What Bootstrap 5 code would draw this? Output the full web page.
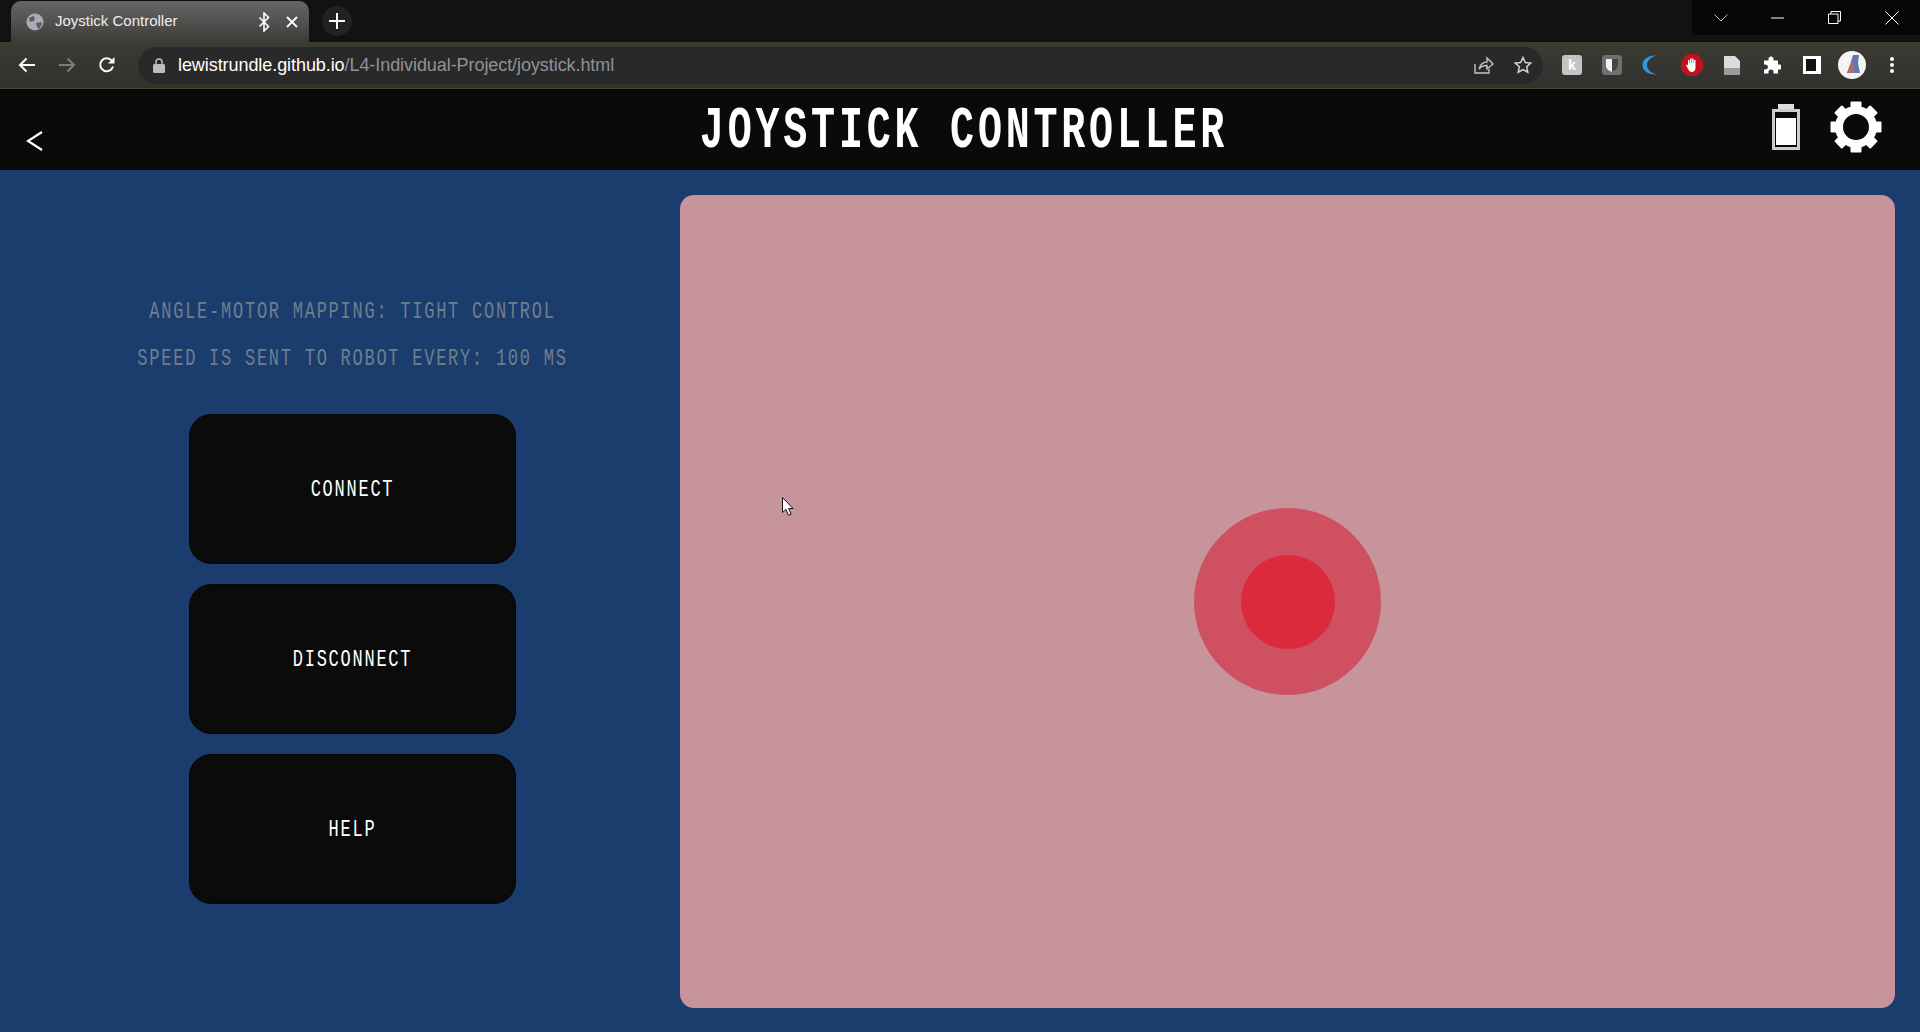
<!DOCTYPE html>
<html lang="en">
<head>
    <meta charset="UTF-8">
    <meta name="viewport" content="width=device-width, initial-scale=1.0">
    <title>Joystick Controller</title>
    <link rel="stylesheet" href="https://cdn.jsdelivr.net/npm/bootstrap@5.3.0/dist/css/bootstrap.min.css">
    <style>
        html, body { height: 100%; overflow: hidden; }
        body { background: #1b3d6e; font-family: "Liberation Sans", Arial, sans-serif; }

        /* browser frame */
        .tab-strip { height: 42px; background: #121212; }
        .browser-tab { width: 298px; height: 41px; margin: 1px 0 0 11px; padding: 0 11px 0 15px; border-radius: 10px 10px 0 0;
            background: linear-gradient(#666, #3c3c38); color: #eee; font-size: 15px; }
        .tab-title { margin-left: 3px; }
        .new-tab { width: 30px; height: 30px; margin: 6px 0 0 13px; background: #222; }
        .win-controls { height: 35px; background: #060606; }
        .win-btn { width: 57px; height: 35px; }
        .tool-bar { height: 47px; padding-left: 7px; background: linear-gradient(#3c3c33, #303030); border-bottom: 1px solid #4a4630; }
        .tool-btn { width: 40px; height: 40px; }
        .omni-box { height: 37px; margin-left: 11px; padding: 0 7px 0 11px; background: #292929; color: #8f9398; font-size: 18px; letter-spacing: -.07px; }
        .omni-url { margin-left: 5px; }
        .omni-host { color: #fff; }
        .share-icon { margin-right: 20px; }
        .ext-area { width: 377px; padding-left: 9px; }
        .ext-k { width: 20px; height: 20px; background: #c4c4c4; color: #fff; font-size: 14px; font-weight: 700; line-height: 20px; text-align: center; border-radius: 3px; }
        .ext-moon { margin-right: 4px; }

        /* page */
        .page-head { height: 81px; background: #0a0a0a; }
        .head-side { flex: 1 1 0; }
        .head-icons { padding-bottom: 6px; gap: 30px; }
        .gear-icon { margin-right: 38px; }
        .back-link { margin: 21px 0 0 26px; }
        .digi { display: inline-block; font-family: "Liberation Mono", "Courier New", monospace; transform: scaleY(1.4); }
        .digi-title { font-size: 40px; font-weight: 700; letter-spacing: 3.8px; line-height: 1; color: #fff; transform: scaleY(1.48); margin: 4px 0 0 8px; }
        .side-col { width: 680px; padding: 129px 0 0 25px; }
        .info-line { height: 47px; margin: 0; line-height: 23px; text-align: center; color: #6e7f8d; }
        .digi-sm { font-size: 17px; letter-spacing: 1.75px; }
        .pad-stack { margin-top: 21px; gap: 20px; }
        .pad-btn { width: 327px; height: 150px; padding-top: 8px; border: 1px solid #050505; border-radius: 22px; background: #0b0b0b; color: #fff; }
        .pad-btn:hover { background: #0b0b0b; color: #fff; }
        .stick-area { margin: 25px 25px 24px 0; border-radius: 14px; background: #c6949a; }
        .stick-base { width: 187px; height: 187px; background: #cf5060; }
        .stick-knob { width: 94px; height: 94px; background: #db2a3b; }
        .mouse-cursor { position: absolute; left: 782px; top: 497px; }
    </style>
</head>
<body class="d-flex flex-column">
    <div class="tab-strip d-flex align-items-start flex-shrink-0">
        <div class="browser-tab d-flex align-items-center">
            <svg width="18" height="18" viewBox="0 0 18 18" class="me-2 flex-shrink-0"><circle cx="9" cy="9" r="8.5" fill="#a9adb3"/><path d="M3 5l4-2 2 2-1 3-4 1zM10 10l5-1 1 2-3 5-2-2z" fill="#5b5e63"/></svg>
            <span class="tab-title flex-grow-1">Joystick Controller</span>
            <svg width="12" height="20" viewBox="0 0 12 20" class="me-3"><path d="M1.5 5.500l9 9-4.500 4.500v-18l4.500 4.500-9 9" fill="none" stroke="#fff" stroke-width="1.600"/></svg>
            <svg width="12" height="12" viewBox="0 0 12 12"><path d="M1 1l10 10M11 1l-10 10" stroke="#fff" stroke-width="1.800"/></svg>
        </div>
        <div class="new-tab d-flex align-items-center justify-content-center rounded-circle">
            <svg width="16" height="16" viewBox="0 0 16 16"><path d="M8 0v16M0 8h16" stroke="#fff" stroke-width="2"/></svg>
        </div>
        <div class="win-controls d-flex ms-auto">
            <div class="win-btn d-flex align-items-center justify-content-center"><svg width="14" height="8" viewBox="0 0 14 8"><path d="M.5.500l6.500 6.500 6.500-6.500" fill="none" stroke="#bbb"/></svg></div>
            <div class="win-btn d-flex align-items-center justify-content-center"><svg width="13" height="2" viewBox="0 0 13 2"><path d="M0 1h13" stroke="#fff"/></svg></div>
            <div class="win-btn d-flex align-items-center justify-content-center"><svg width="13" height="13" viewBox="0 0 13 13"><path d="M3 3V.5h9.500V10H10M.5 3h9.500v9.500H.5z" fill="none" stroke="#fff"/></svg></div>
            <div class="win-btn d-flex align-items-center justify-content-center"><svg width="14" height="14" viewBox="0 0 14 14"><path d="M.5.500l13 13M13.500.500l-13 13" stroke="#fff"/></svg></div>
        </div>
    </div>

    <div class="tool-bar d-flex align-items-center flex-shrink-0">
        <div class="tool-btn d-flex align-items-center justify-content-center"><svg width="18" height="16" viewBox="0 0 18 16"><path d="M17 8H2M8.500 1.500L2 8l6.500 6.500" fill="none" stroke="#fff" stroke-width="2"/></svg></div>
        <div class="tool-btn d-flex align-items-center justify-content-center"><svg width="18" height="16" viewBox="0 0 18 16"><path d="M1 8h15M9.500 1.500L16 8l-6.500 6.500" fill="none" stroke="#7c7c7c" stroke-width="2"/></svg></div>
        <div class="tool-btn d-flex align-items-center justify-content-center"><svg width="18" height="18" viewBox="0 0 18 18"><path d="M15 10.500A6.500 6.500 0 1 1 13.600 4.400" fill="none" stroke="#fff" stroke-width="2"/><path d="M16.500 1v6.500H10z" fill="#fff"/></svg></div>
        <div class="omni-box d-flex align-items-center flex-grow-1 rounded-pill">
            <svg width="12" height="15" viewBox="0 0 12 15" class="ms-1 me-2 flex-shrink-0"><path d="M3 6V4a3 3 0 0 1 6 0v2" fill="none" stroke="#bdbdbd" stroke-width="1.500"/><rect y="6" width="12" height="9" rx="1.500" fill="#bdbdbd"/></svg>
            <span class="omni-url flex-grow-1"><span class="omni-host">lewistrundle.github.io</span>/L4-Individual-Project/joystick.html</span>
            <svg width="20" height="18" viewBox="0 0 20 18" class="share-icon"><path d="M1 8v9h14v-4M5 13c1-5 5-7 8-7V2l6 6-6 5V9.500c-3 0-6 1-8 3.500z" fill="none" stroke="#c4c4c4" stroke-width="1.400"/></svg>
            <svg width="18" height="18" viewBox="0 0 18 18" class="me-1"><path d="M9 1.500l2.300 5 5.400.6-4 3.700 1.100 5.400L9 13.500l-4.800 2.700 1.100-5.400-4-3.700 5.400-.6z" fill="none" stroke="#d4d4d4" stroke-width="1.500"/></svg>
        </div>
        <div class="ext-area d-flex flex-shrink-0">
            <div class="tool-btn d-flex align-items-center justify-content-center"><span class="ext-k">k</span></div>
            <div class="tool-btn d-flex align-items-center justify-content-center"><svg width="20" height="20" viewBox="0 0 20 20"><rect width="20" height="20" rx="3" fill="#6f6f6f"/><path d="M4 4h12v7c0 3-3 5-6 6-3-1-6-3-6-6z" fill="#f2f2f2"/><path d="M10 4h6v7c0 3-3 5-6 6z" fill="#444"/></svg></div>
            <div class="tool-btn d-flex align-items-center justify-content-center"><svg width="16" height="20" viewBox="0 0 16 20" class="ext-moon"><path d="M14.500 0.500C6 0 0.500 4.500 0.500 10s5.500 10 14 9.500C9 18 5 14.500 5 10s4-8 9.500-9.500z" fill="#2f97e0"/></svg></div>
            <div class="tool-btn d-flex align-items-center justify-content-center"><svg width="22" height="22" viewBox="0 0 22 22"><path d="M6.500 0h9L22 6.500v9L15.500 22h-9L0 15.500v-9z" fill="#c4101c"/><path d="M7 9V6h1.500v3h.5V4.500h1.500V9h.5V4.500h1.500V9h.5V6h1.500v8c0 2-1.500 4-3.500 4-2 0-3-1-4-3l-2-4 1.200-.6L7 12z" fill="#fff"/></svg></div>
            <div class="tool-btn d-flex align-items-center justify-content-center"><svg width="16" height="19" viewBox="0 0 16 19"><path d="M0 0h11l5 5v14H0z" fill="#dcdcdc"/><path d="M0 12h16v7H0z" fill="#9a9a9a"/></svg></div>
            <div class="tool-btn d-flex align-items-center justify-content-center"><svg width="18" height="18" viewBox="0 0 18 18"><path d="M6 3.500a2.500 2.500 0 0 1 5 0V5h4.500v4H17a2.500 2.500 0 0 1 0 5h-1.500v4H11v-1.500a2.500 2.500 0 0 0-5 0V18H1.500v-4H3a2.500 2.500 0 0 0 0-5H1.500V5H6z" fill="#fff" transform="translate(-.5 -.5)"/></svg></div>
            <div class="tool-btn d-flex align-items-center justify-content-center"><svg width="18" height="18" viewBox="0 0 18 18"><rect x="1.500" y="1.500" width="15" height="15" fill="#111" stroke="#fff" stroke-width="3"/><path d="M13 1h4v16h-4z" fill="#fff"/></svg></div>
            <div class="tool-btn d-flex align-items-center justify-content-center"><svg width="28" height="28" viewBox="0 0 28 28"><circle cx="14" cy="14" r="14" fill="#f4f4f4"/><path d="M15 4h6l-1 8 2 10H9l3-8z" fill="#5f78b0"/><path d="M12 14l3-4 1 12H9z" fill="#b06a70"/></svg></div>
            <div class="tool-btn d-flex align-items-center justify-content-center"><svg width="4" height="16" viewBox="0 0 4 16"><circle cx="2" cy="2" r="2" fill="#fff"/><circle cx="2" cy="8" r="2" fill="#fff"/><circle cx="2" cy="14" r="2" fill="#fff"/></svg></div>
        </div>
    </div>

    <header class="page-head d-flex align-items-center flex-shrink-0">
        <div class="head-side">
            <a href="#" class="back-link d-inline-block"><svg width="17" height="20" viewBox="0 0 17 20"><path d="M16 1L2 10l14 9" fill="none" stroke="#fff" stroke-width="2.200"/></svg></a>
        </div>
        <h1 class="digi digi-title">JOYSTICK CONTROLLER</h1>
        <div class="head-side head-icons d-flex justify-content-end align-items-center">
            <svg width="28" height="46" viewBox="0 0 28 46"><path d="M6 0h16v5H6z" fill="#ddd"/><rect x="1.500" y="6.500" width="25" height="38" fill="none" stroke="#ccc" stroke-width="3"/><path d="M4 14h20v27H4z" fill="#fff"/></svg>
            <svg width="52" height="52" viewBox="-26 -26 52 52" class="gear-icon">
                <circle r="17" fill="none" stroke="#fff" stroke-width="8"/>
                <g fill="#fff">
                    <rect x="-5.500" y="-25.500" width="11" height="8" rx="1"/>
                    <rect x="-5.500" y="-25.500" width="11" height="8" rx="1" transform="rotate(45)"/>
                    <rect x="-5.500" y="-25.500" width="11" height="8" rx="1" transform="rotate(90)"/>
                    <rect x="-5.500" y="-25.500" width="11" height="8" rx="1" transform="rotate(135)"/>
                    <rect x="-5.500" y="-25.500" width="11" height="8" rx="1" transform="rotate(180)"/>
                    <rect x="-5.500" y="-25.500" width="11" height="8" rx="1" transform="rotate(225)"/>
                    <rect x="-5.500" y="-25.500" width="11" height="8" rx="1" transform="rotate(270)"/>
                    <rect x="-5.500" y="-25.500" width="11" height="8" rx="1" transform="rotate(315)"/>
                </g>
            </svg>
        </div>
    </header>

    <main class="d-flex flex-grow-1">
        <section class="side-col flex-shrink-0 d-flex flex-column align-items-center">
            <p class="info-line"><span class="digi digi-sm">ANGLE-MOTOR MAPPING: TIGHT CONTROL</span></p>
            <p class="info-line"><span class="digi digi-sm">SPEED IS SENT TO ROBOT EVERY: 100 MS</span></p>
            <div class="pad-stack d-flex flex-column">
                <button type="button" class="btn pad-btn"><span class="digi digi-sm">CONNECT</span></button>
                <button type="button" class="btn pad-btn"><span class="digi digi-sm">DISCONNECT</span></button>
                <button type="button" class="btn pad-btn"><span class="digi digi-sm">HELP</span></button>
            </div>
        </section>
        <section class="stick-area flex-grow-1 d-flex align-items-center justify-content-center">
            <div class="stick-base rounded-circle d-flex align-items-center justify-content-center">
                <div class="stick-knob rounded-circle"></div>
            </div>
        </section>
    </main>

    <svg class="mouse-cursor" width="12" height="19" viewBox="0 0 12 19"><path d="M.5.500v15l3.500-3.200 2.500 6 2.600-1.100-2.500-5.700H11z" fill="#fff" stroke="#111"/></svg>
    <script src="https://cdn.jsdelivr.net/npm/bootstrap@5.3.0/dist/js/bootstrap.bundle.min.js"></script>
</body>
</html>
